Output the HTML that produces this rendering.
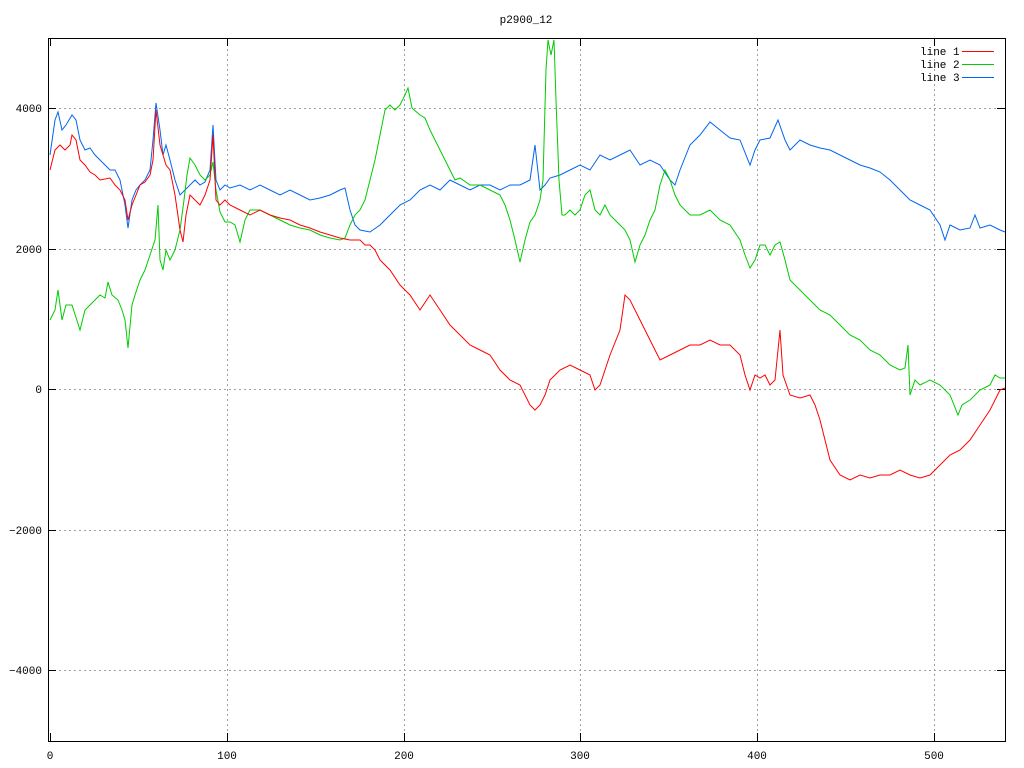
<!DOCTYPE html>
<html><head><meta charset="utf-8"><style>
html,body{margin:0;padding:0;background:#fff;width:1024px;height:768px;overflow:hidden}
text{font-family:"Liberation Mono","DejaVu Sans Mono",monospace;font-size:11px;fill:#000}
</style></head><body>
<svg width="1024" height="768" viewBox="0 0 1024 768" xmlns="http://www.w3.org/2000/svg">
<rect width="1024" height="768" fill="#fff"/>
<g stroke="#a0a0a0" stroke-width="1" stroke-dasharray="2,3" fill="none">
<path d="M49 108.5H1004M49 249.5H1004M49 389.5H1004M49 530.5H1004M49 670.5H1004"/>
<path d="M227.5 39V740M404.5 39V740M580.5 39V740M757.5 39V740M934.5 39V740"/>
</g>
<rect x="48.5" y="38.5" width="957" height="703" fill="none" stroke="#000"/>
<g stroke="#000" fill="none">
<path d="M48 108.5h8M48 249.5h8M48 389.5h8M48 530.5h8M48 670.5h8M1005 108.5h-8M1005 249.5h-8M1005 389.5h-8M1005 530.5h-8M1005 670.5h-8"/>
<path d="M50.5 741v-8M227.5 741v-8M404.5 741v-8M580.5 741v-8M757.5 741v-8M934.5 741v-8M50.5 38v8M227.5 38v8M404.5 38v8M580.5 38v8M757.5 38v8M934.5 38v8"/>
</g>
<g text-anchor="end">
<text x="42" y="112">4000</text><text x="42" y="253">2000</text><text x="42" y="393">0</text>
<text x="42" y="534">−2000</text><text x="42" y="674">−4000</text>
</g>
<g text-anchor="middle">
<text x="50" y="759">0</text><text x="227" y="759">100</text><text x="404" y="759">200</text>
<text x="580" y="759">300</text><text x="757" y="759">400</text><text x="934" y="759">500</text>
<text x="526" y="23">p2900_12</text>
</g>
<text x="920" y="55">line 1</text><text x="920" y="68">line 2</text><text x="920" y="81">line 3</text>
<path d="M962 51.5h32" stroke="#f00"/><path d="M962 64.5h32" stroke="#0c0"/><path d="M962 77.5h32" stroke="#06e"/>
<g fill="none" stroke-width="1">
<polyline stroke="#06e" points="50,155 55,120 58,112 62,130 66,125 72,115 76,120 80,140 85,150 90,148 95,155 100,160 105,165 110,170 115,170 120,180 125,205 128,228 132,200 136,190 140,185 145,180 150,170 153,140 156,103 160,130 163,155 166,145 170,160 175,180 180,195 185,190 190,185 195,180 200,185 205,182 210,170 213,125 216,180 220,190 225,185 230,188 240,185 250,190 260,185 270,190 280,195 290,190 300,195 310,200 320,198 330,195 340,190 345,188 350,210 355,225 360,230 370,232 380,225 390,215 400,205 410,200 420,190 430,185 440,190 450,180 460,185 470,190 480,185 490,185 500,190 510,185 520,185 530,180 535,145 540,190 545,185 550,178 560,175 570,170 580,165 590,170 600,155 610,160 620,155 630,150 640,165 650,160 660,165 670,180 675,185 680,170 690,145 700,135 710,122 720,130 730,138 740,140 750,165 755,150 760,140 770,138 778,120 785,140 790,150 800,140 810,145 820,148 830,150 840,155 850,160 860,165 870,168 880,172 890,180 900,190 910,200 920,205 930,210 940,225 945,240 950,225 960,230 970,228 975,215 980,228 990,225 1000,230 1005,232"/>
<polyline stroke="#0c0" points="50,320 55,310 58,290 62,320 66,305 72,305 80,330 85,310 90,305 100,295 105,298 108,282 112,295 118,300 122,310 125,320 128,348 132,305 135,295 140,280 145,270 150,255 155,240 158,205 160,260 163,270 166,250 170,260 175,250 180,230 184,200 187,175 190,158 195,165 200,175 205,180 210,175 213,162 216,190 220,212 225,222 230,222 235,225 240,242 245,220 250,210 260,210 270,215 280,220 290,225 300,228 310,230 320,235 330,238 340,240 345,238 350,225 355,215 360,210 365,200 370,180 375,160 380,135 385,110 390,105 395,110 400,105 405,95 408,88 412,108 420,115 425,118 430,130 440,150 450,170 455,180 460,178 470,185 480,185 490,190 500,195 505,205 510,220 515,240 520,262 525,240 530,222 535,215 540,200 543,180 546,70 548,40 551,55 554,40 556,100 559,180 562,215 565,215 570,210 575,215 580,210 585,195 590,190 595,210 600,215 605,205 610,215 615,220 620,225 625,230 630,240 635,262 640,245 645,235 650,220 655,210 660,185 665,170 670,180 675,195 680,205 690,215 700,215 710,210 720,220 730,225 740,240 745,255 750,268 755,260 760,245 765,245 770,255 775,245 780,242 785,260 790,280 795,285 800,290 810,300 820,310 830,315 840,325 850,335 860,340 870,350 880,355 890,365 900,370 905,368 908,345 910,395 915,380 920,385 930,380 940,385 950,395 958,415 962,405 970,400 980,390 990,385 995,375 1000,378 1005,378"/>
<polyline stroke="#f00" points="50,170 55,150 60,145 65,150 70,145 72,135 76,140 80,160 85,165 90,172 95,175 100,180 110,178 115,185 120,190 125,200 128,220 132,205 136,195 140,185 145,182 150,175 153,160 156,110 160,145 163,155 166,165 170,170 175,195 180,230 183,242 186,215 190,195 195,200 200,205 205,195 210,180 213,135 216,200 220,205 225,200 230,205 240,210 250,215 260,210 270,215 280,218 290,220 300,225 310,228 320,232 330,235 340,238 350,240 360,240 365,245 370,245 375,250 380,260 390,270 400,285 410,295 420,310 430,295 440,310 450,325 460,335 470,345 480,350 490,355 500,370 510,380 520,385 530,405 535,410 540,405 545,395 550,380 555,375 560,370 570,365 580,370 590,375 595,390 600,385 610,355 620,330 625,295 630,300 640,320 645,330 650,340 660,360 670,355 680,350 690,345 700,345 710,340 720,345 730,345 740,355 745,375 750,390 755,375 760,378 765,375 770,385 775,380 780,330 783,375 790,395 800,398 810,395 815,405 820,420 825,440 830,460 840,475 850,480 860,475 870,478 880,475 890,475 900,470 910,475 920,478 930,475 940,465 950,455 960,450 970,440 980,425 990,410 1000,390 1005,388"/>
</g>
</svg>
</body></html>
